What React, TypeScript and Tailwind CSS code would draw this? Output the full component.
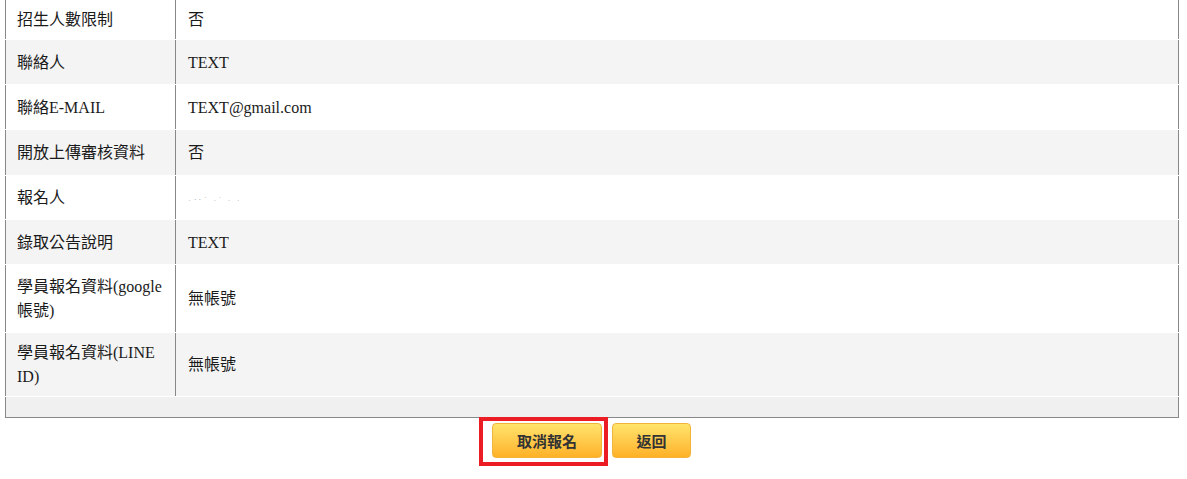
const rows: { label: string; value: string; h: string; shade: boolean; blur?: boolean }[] = [
  { label: "招生人數限制", value: "否", h: "h-[39px]", shade: false },
  { label: "聯絡人", value: "TEXT", h: "h-[44px]", shade: true },
  { label: "聯絡E-MAIL", value: "TEXT@gmail.com", h: "h-[44px]", shade: false },
  { label: "開放上傳審核資料", value: "否", h: "h-[45px]", shade: true },
  { label: "報名人", value: "", h: "h-[43px]", shade: false, blur: true },
  { label: "錄取公告說明", value: "TEXT", h: "h-[44px]", shade: true },
  { label: "學員報名資料(google 帳號)", value: "無帳號", h: "h-[67px]", shade: false },
  { label: "學員報名資料(LINE ID)", value: "無帳號", h: "h-[63px]", shade: true },
];

export default function App() {
  return (
    <div className="min-h-[479px] bg-white text-[16px] leading-6 text-[#1a1a1a] [font-family:'Liberation_Serif','Noto_Sans_CJK_TC',serif]">
      <div className="ml-[5px] w-[1174px]">
        {rows.map((r, i) => (
          <div
            key={r.label}
            className={`flex border-x border-[#888] ${i > 0 ? "mt-px" : ""} ${r.h} ${
              r.shade ? "bg-[#f4f4f4]" : "bg-white"
            }`}
          >
            <div className="flex w-[170px] shrink-0 items-center border-r border-[#888] pl-[11px] pr-2 pt-px">
              {r.label}
            </div>
            <div className="flex flex-1 items-center pl-3 pt-px">
              {r.blur ? (
                <span className="pt-1 text-[9px] tracking-[2px] text-[#b8b8b8]">·‥˙ ·˙ · ·</span>
              ) : (
                r.value
              )}
            </div>
          </div>
        ))}
        <div className="mt-px h-[21px] border-x border-b border-[#888] bg-[#f0f0f0]" />
      </div>

      <div className="relative mt-[5px] flex justify-center gap-[10px] pr-[4px] [font-family:'Noto_Sans_CJK_TC',sans-serif]">
        <button className="h-[35px] w-[110px] rounded-[4px] border border-[#f2b43a] bg-gradient-to-b from-[#ffe46a] to-[#ffb124] text-[15px] font-bold text-[#333]">
          取消報名
        </button>
        <button className="h-[35px] w-[79px] rounded-[4px] border border-[#f2b43a] bg-gradient-to-b from-[#ffe46a] to-[#ffb124] text-[15px] font-bold text-[#333]">
          返回
        </button>
        <div className="pointer-events-none absolute left-[479px] top-[-6px] h-[49px] w-[129px] border-4 border-[#ec1c24]" />
      </div>
    </div>
  );
}
